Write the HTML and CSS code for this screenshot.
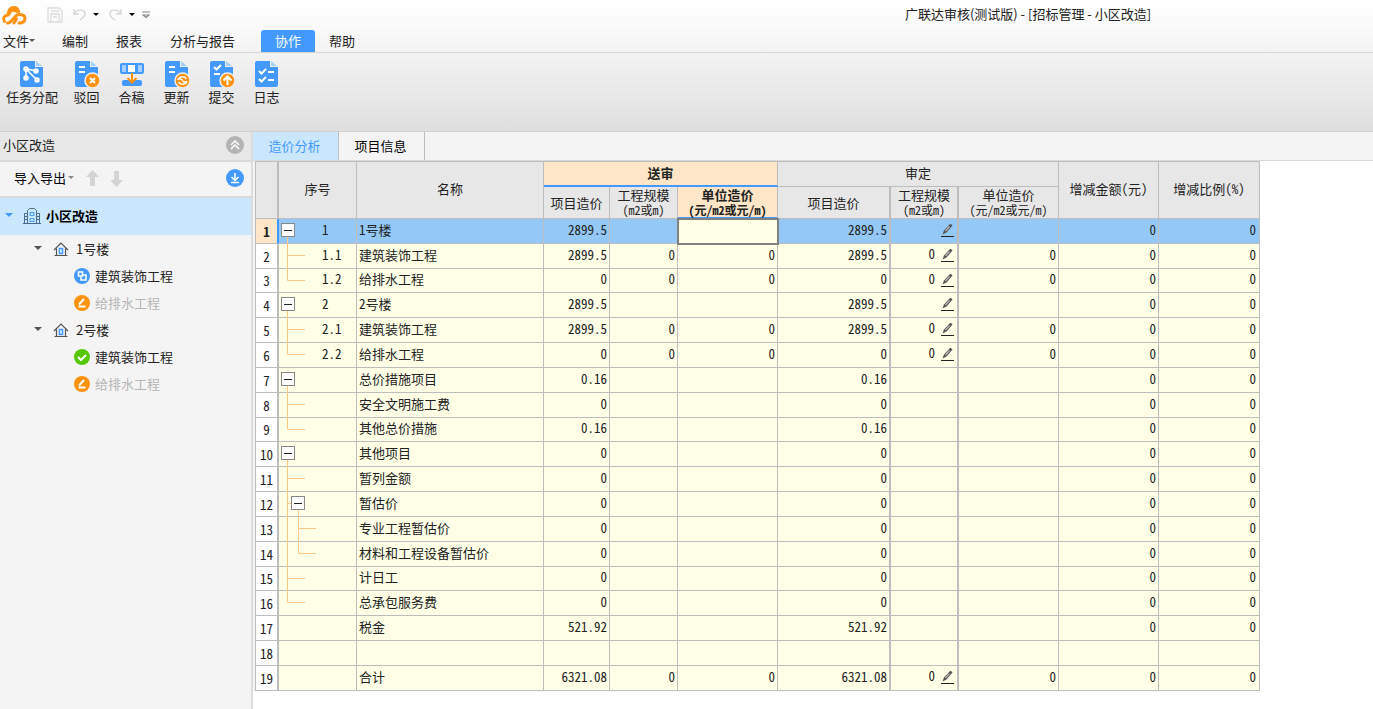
FILE: index.html
```html
<!DOCTYPE html>
<html lang="zh-CN">
<head>
<meta charset="utf-8">
<title>广联达审核</title>
<link rel="stylesheet" href="styles.css">
</head>
<body>
<svg class="defs" aria-hidden="true">
  <symbol id="pen" viewBox="0 0 14 14"><path d="M2.500 11.500 4 7.500 10 1q1.500-.5 2.500 1.500L6.500 9.500Z" fill="#555"/><path d="M5.500 8 9.500 3.500" stroke="#bbb" stroke-width="1.200"/><path d="M1 13.500H14" stroke="#222"/></symbol>
  <symbol id="house" viewBox="0 0 16 16"><path d="M1 9 8 2l7 7M3.500 7.500v7M12.500 7.500v7M1.500 14.500h13" fill="none" stroke="#555" stroke-width="1.200"/><path d="M6.500 7.500h3v5h-3z" fill="#fff" stroke="#4499ff" stroke-width="1.600"/></symbol>
  <symbol id="edit" viewBox="0 0 16 16"><circle cx="8" cy="8" r="8" fill="#ff930f"/><path d="m5 9.500 5-5.500M4.500 11.500h7" stroke="#fff" stroke-width="2"/></symbol>
  <symbol id="page" viewBox="0 0 26 28"><path d="M3 1H16V7H24V25a2 2 0 0 1-2 2H3a2 2 0 0 1-2-2V3a2 2 0 0 1 2-2Z" fill="#4499ff"/><path d="m17 1 6 5h-6Z" fill="#a6d0ff"/></symbol>
</svg>
<header class="titlebar">
  <svg class="logo" width="26" height="20" viewBox="0 0 26 20" fill="none" stroke="#ff930f" stroke-width="3" stroke-linecap="round" stroke-linejoin="round"><path d="M3.500 16.500C1.500 13.500 3 10.500 7 10 7.500 5 9.500 2.500 12.500 2.500c3 0 4.500 1.500 5 4"/><path d="M8 8.500C9 5 11 3.500 16 6" stroke-width="4"/><path d="M6.500 18c5 0 6-8.500 12-8.500 3.500 0 5.500 1.500 5.500 4 0 3-2.500 4.500-6 4.500M13 18l2.500-4"/></svg>
  <div class="quick">
    <button type="button" aria-label="保存"><svg width="16" height="16" viewBox="0 0 16 16" fill="none" stroke="#dcdcdc" stroke-width="1.300"><path d="M1 1h11l3 3v11H1zM4 4h8M4 15V7h8v8M6 10h4"/></svg></button>
    <button type="button" aria-label="撤销" class="undo"><svg width="13" height="13" viewBox="0 0 13 13" fill="none" stroke="#d4d4d4" stroke-width="1.300"><path d="M1 1v5h5M1 6c3-5 10-5 11-1 .6 3-2 5-5 7"/></svg></button>
    <svg class="caret" width="6" height="4"><path d="M0 0h6L3 3Z"/></svg>
    <button type="button" aria-label="重做" class="redo"><svg width="13" height="13" viewBox="0 0 13 13" fill="none" stroke="#d4d4d4" stroke-width="1.300"><path d="M12 1v5H7M12 6C9 1 2 1 1 5c-.6 3 2 5 5 7"/></svg></button>
    <svg class="caret" width="6" height="4"><path d="M0 0h6L3 3Z"/></svg>
    <svg class="caret" width="8" height="8" fill="none" stroke="#888" stroke-width="1.200"><path d="M0 1h8M1 4l3 2.500L7 4Z"/></svg>
  </div>
  <h1>广联达审核(测试版) - [招标管理 - 小区改造]</h1>
</header>
<nav class="menu">
  <button type="button" class="file">文件<svg width="6" height="4" fill="#555"><path d="M0 0h6L3 3Z"/></svg></button>
  <button type="button">编制</button>
  <button type="button">报表</button>
  <button type="button">分析与报告</button>
  <button type="button" class="current">协作</button>
  <button type="button">帮助</button>
</nav>
<div class="ribbon">
  <button type="button"><svg width="26" height="28"><use href="#page"/><g fill="#fff" stroke="#fff" stroke-width="1.500"><path d="M7 9 18 11M7 9v9M7 9l11 11" fill="none"/><circle cx="7" cy="9" r="2"/><circle cx="17" cy="11" r="2"/><circle cx="7" cy="18" r="2"/><circle cx="18" cy="20" r="2"/></g></svg>任务分配</button>
  <button type="button"><svg width="26" height="28"><use href="#page"/><path d="M5 7h6M5 12h6" stroke="#fff" stroke-width="2"/><circle cx="18.500" cy="20.500" r="7.500" fill="#ff930f" stroke="#eee" stroke-width="1.500"/><path d="m16 18 5 5m0-5-5 5" stroke="#fff" stroke-width="2"/></svg>驳回</button>
  <button type="button"><svg width="26" height="28"><rect x="1" y="3" width="24" height="11" rx="2" fill="#4499ff"/><path d="M3 5h4v7H3zM19 5h4v7h-4z" fill="#a6d0ff"/><path d="M9 5h7v7H9z" fill="#fff"/><rect x="3" y="20" width="20" height="6" rx="2" fill="#4499ff"/><path d="M13 13v9M8.500 18l4.500 4.500 4.500-4.500" fill="none" stroke="#ff930f" stroke-width="2"/></svg>合稿</button>
  <button type="button"><svg width="26" height="28"><use href="#page"/><path d="M5 7h6M5 12h6" stroke="#fff" stroke-width="2"/><circle cx="18.500" cy="20.500" r="7.500" fill="#ff930f" stroke="#eee" stroke-width="1.500"/><path d="M14 20c1-4 7-4 8.500-1M23 21c-1 4-7 4-8.500 1M15 18.500l3.500 1.500M22 22.500 18.500 21" fill="none" stroke="#fff" stroke-width="1.500"/></svg>更新</button>
  <button type="button"><svg width="26" height="28"><use href="#page"/><path d="m5 7 2.500 2.500L12 5M5 14h6" fill="none" stroke="#fff" stroke-width="2"/><circle cx="18.500" cy="20.500" r="7.500" fill="#ff930f" stroke="#eee" stroke-width="1.500"/><path d="M18.500 25v-8M14.500 20.500l4-4 4 4" fill="none" stroke="#fff" stroke-width="2"/></svg>提交</button>
  <button type="button"><svg width="26" height="28"><use href="#page"/><path d="m5 11 2.500 2.500L12 9M5 19l2.500 2.500L12 17M14 12h6M14 20h6" fill="none" stroke="#fff" stroke-width="2"/></svg>日志</button>
</div>
<div class="workspace">
  <aside class="side">
    <div class="side-title"><h2>小区改造</h2><button type="button" aria-label="收起"><svg width="18" height="18"><circle cx="9" cy="9" r="9" fill="#b4b4b4"/><path d="m5 9 4-4 4 4M5 13l4-4 4 4" fill="none" stroke="#fff" stroke-width="1.500"/></svg></button></div>
    <div class="side-tools">
      <button type="button" class="io">导入导出<svg width="6" height="4" fill="#888"><path d="M0 0h6L3 3Z"/></svg></button>
      <button type="button" aria-label="上移"><svg width="13" height="17" fill="#d4d4d4"><path d="M6.500 0 13 7H9v9H4V7H0Z"/></svg></button>
      <button type="button" aria-label="下移" class="down"><svg width="13" height="17" fill="#d4d4d4"><path d="M6.500 17 13 10H9V1H4v9H0Z"/></svg></button>
      <button type="button" aria-label="下载" class="last"><svg width="18" height="18"><circle cx="9" cy="9" r="9" fill="#4499ff"/><path d="M9 4v7M5.500 8 9 11.500 12.500 8M5 13.500h8" fill="none" stroke="#fff" stroke-width="1.500"/></svg></button>
    </div>
    <ul class="nav-tree">
      <li class="root"><svg class="arrow" width="8" height="5" fill="#4499ff"><path d="M0 0h8L4 4Z"/></svg><svg width="18" height="18" fill="none" stroke="#4b6c93"><path d="M4.500 16V3.500l2-2h5l2 2V16M1.500 16V6.500h3M13.500 6.500h3V16M0 16.500h18M2 9.500h2M2 12.500h2M14 9.500h2M14 12.500h2"/><path d="M7 5.500h4v3H7zM7 11.500h4v3H7z" stroke="#4499ff"/></svg>小区改造</li>
      <li class="building"><svg class="arrow" width="8" height="5" fill="#555"><path d="M0 0h8L4 4Z"/></svg><svg width="16" height="16"><use href="#house"/></svg>1号楼</li>
      <li class="leaf"><svg width="16" height="16"><circle cx="8" cy="8" r="8" fill="#4499ff"/><path d="M4.500 4h4v4h-4zM8 7h4v5H7V9" fill="none" stroke="#fff" stroke-width="1.500"/></svg>建筑装饰工程</li>
      <li class="leaf muted"><svg width="16" height="16"><use href="#edit"/></svg>给排水工程</li>
      <li class="building"><svg class="arrow" width="8" height="5" fill="#555"><path d="M0 0h8L4 4Z"/></svg><svg width="16" height="16"><use href="#house"/></svg>2号楼</li>
      <li class="leaf"><svg width="16" height="16"><circle cx="8" cy="8" r="8" fill="#55c800"/><path d="m4 8 3 3 5-5" fill="none" stroke="#fff" stroke-width="2"/></svg>建筑装饰工程</li>
      <li class="leaf muted"><svg width="16" height="16"><use href="#edit"/></svg>给排水工程</li>
    </ul>
  </aside>
  <main>
    <div class="tabs"><button type="button" class="current">造价分析</button><button type="button">项目信息</button></div>
    <div class="sheet">
    <table>
      <colgroup><col class="c-row"><col class="c-tree"><col class="c-name"><col class="c-cost"><col class="c-scale"><col class="c-unit"><col class="c-cost2"><col class="c-scale"><col class="c-unit"><col class="c-unit"><col class="c-last"></colgroup>
      <thead>
        <tr class="h1"><th rowspan="2" class="thick"></th><th rowspan="2">序号</th><th rowspan="2">名称</th><th colspan="3" class="hot">送审</th><th colspan="3">审定</th><th rowspan="2">增减金额(元)</th><th rowspan="2">增减比例(%)</th></tr>
        <tr class="h2"><th>项目造价</th><th>工程规模<span class="unit">(m2或m)</span></th><th class="hot">单位造价<span class="unit">(元/m2或元/m)</span></th><th class="thick">项目造价</th><th class="thick">工程规模<span class="unit">(m2或m)</span></th><th>单位造价<span class="unit">(元/m2或元/m)</span></th></tr>
      </thead>
      <tbody>
        <tr class="selected"><th>1</th><td class="tree"><svg class="guide"><path d="M8.500 18V25"/></svg><button type="button" class="toggle" aria-label="折叠"></button>1</td><td>1号楼</td><td>2899.5</td><td></td><td class="active"></td><td>2899.5</td><td><button type="button" class="pen" aria-label="编辑"><svg><use href="#pen"/></svg></button></td><td></td><td>0</td><td>0</td></tr>
        <tr><th>2</th><td class="tree"><svg class="guide"><path d="M8.500 0V25M8.500 11.500H26"/></svg>1.1</td><td>建筑装饰工程</td><td>2899.5</td><td>0</td><td>0</td><td>2899.5</td><td>0<button type="button" class="pen" aria-label="编辑"><svg><use href="#pen"/></svg></button></td><td>0</td><td>0</td><td>0</td></tr>
        <tr class="tight"><th>3</th><td class="tree"><svg class="guide"><path d="M8.500 0V11.500H26"/></svg>1.2</td><td>给排水工程</td><td>0</td><td>0</td><td>0</td><td>0</td><td>0<button type="button" class="pen" aria-label="编辑"><svg><use href="#pen"/></svg></button></td><td>0</td><td>0</td><td>0</td></tr>
        <tr><th>4</th><td class="tree"><svg class="guide"><path d="M8.500 18V25"/></svg><button type="button" class="toggle" aria-label="折叠"></button>2</td><td>2号楼</td><td>2899.5</td><td></td><td></td><td>2899.5</td><td><button type="button" class="pen" aria-label="编辑"><svg><use href="#pen"/></svg></button></td><td></td><td>0</td><td>0</td></tr>
        <tr><th>5</th><td class="tree"><svg class="guide"><path d="M8.500 0V25M8.500 11.500H26"/></svg>2.1</td><td>建筑装饰工程</td><td>2899.5</td><td>0</td><td>0</td><td>2899.5</td><td>0<button type="button" class="pen" aria-label="编辑"><svg><use href="#pen"/></svg></button></td><td>0</td><td>0</td><td>0</td></tr>
        <tr><th>6</th><td class="tree"><svg class="guide"><path d="M8.500 0V11.500H26"/></svg>2.2</td><td>给排水工程</td><td>0</td><td>0</td><td>0</td><td>0</td><td>0<button type="button" class="pen" aria-label="编辑"><svg><use href="#pen"/></svg></button></td><td>0</td><td>0</td><td>0</td></tr>
        <tr><th>7</th><td class="tree"><svg class="guide"><path d="M8.500 18V25"/></svg><button type="button" class="toggle" aria-label="折叠"></button></td><td>总价措施项目</td><td>0.16</td><td></td><td></td><td>0.16</td><td></td><td></td><td>0</td><td>0</td></tr>
        <tr><th>8</th><td class="tree"><svg class="guide"><path d="M8.500 0V25M8.500 11.500H26"/></svg></td><td>安全文明施工费</td><td>0</td><td></td><td></td><td>0</td><td></td><td></td><td>0</td><td>0</td></tr>
        <tr class="tight"><th>9</th><td class="tree"><svg class="guide"><path d="M8.500 0V11.500H26"/></svg></td><td>其他总价措施</td><td>0.16</td><td></td><td></td><td>0.16</td><td></td><td></td><td>0</td><td>0</td></tr>
        <tr><th>10</th><td class="tree"><svg class="guide"><path d="M8.500 18V25"/></svg><button type="button" class="toggle" aria-label="折叠"></button></td><td>其他项目</td><td>0</td><td></td><td></td><td>0</td><td></td><td></td><td>0</td><td>0</td></tr>
        <tr><th>11</th><td class="tree"><svg class="guide"><path d="M8.500 0V25M8.500 11.500H26"/></svg></td><td>暂列金额</td><td>0</td><td></td><td></td><td>0</td><td></td><td></td><td>0</td><td>0</td></tr>
        <tr><th>12</th><td class="tree"><svg class="guide"><path d="M8.500 0V25M8.500 11.500H13M19.500 18V25"/></svg><button type="button" class="toggle deep" aria-label="折叠"></button></td><td>暂估价</td><td>0</td><td></td><td></td><td>0</td><td></td><td></td><td>0</td><td>0</td></tr>
        <tr><th>13</th><td class="tree"><svg class="guide"><path d="M8.500 0V25M19.500 0V25M19.500 11.500H37"/></svg></td><td>专业工程暂估价</td><td>0</td><td></td><td></td><td>0</td><td></td><td></td><td>0</td><td>0</td></tr>
        <tr><th>14</th><td class="tree"><svg class="guide"><path d="M8.500 0V25M19.500 0V11.500H37"/></svg></td><td>材料和工程设备暂估价</td><td>0</td><td></td><td></td><td>0</td><td></td><td></td><td>0</td><td>0</td></tr>
        <tr class="tight"><th>15</th><td class="tree"><svg class="guide"><path d="M8.500 0V25M8.500 11.500H26"/></svg></td><td>计日工</td><td>0</td><td></td><td></td><td>0</td><td></td><td></td><td>0</td><td>0</td></tr>
        <tr><th>16</th><td class="tree"><svg class="guide"><path d="M8.500 0V11.500H26"/></svg></td><td>总承包服务费</td><td>0</td><td></td><td></td><td>0</td><td></td><td></td><td>0</td><td>0</td></tr>
        <tr><th>17</th><td class="tree"></td><td>税金</td><td>521.92</td><td></td><td></td><td>521.92</td><td></td><td></td><td>0</td><td>0</td></tr>
        <tr><th>18</th><td class="tree"></td><td></td><td></td><td></td><td></td><td></td><td></td><td></td><td></td><td></td></tr>
        <tr><th>19</th><td class="tree"></td><td>合计</td><td>6321.08</td><td>0</td><td>0</td><td>6321.08</td><td>0<button type="button" class="pen" aria-label="编辑"><svg><use href="#pen"/></svg></button></td><td>0</td><td>0</td><td>0</td></tr>
      </tbody>
    </table>
    </div>
  </main>
</div>
</body>
</html>
```
FILE: styles.css
```css
* { box-sizing: border-box; }
body {
  margin: 0;
  min-height: 100vh;
  display: flex;
  flex-direction: column;
  font: 13px/18px "Noto Sans CJK SC", sans-serif;
  color: #222;
  background: #fff;
}
button { border: 0; padding: 0; margin: 0; background: none; font: inherit; color: inherit; }
h1, h2 { margin: 0; font-size: 13px; font-weight: 400; }
svg { flex: none; }
.defs { position: absolute; width: 0; height: 0; }

.titlebar { display: flex; align-items: center; height: 29px; background: linear-gradient(#fff, #f9f9f9); }
.logo { margin-left: 1px; }
.quick { display: flex; align-items: center; margin-left: 20px; width: 102px; }
.quick button { display: flex; }
.quick .undo { margin-left: 10px; }
.quick .redo { margin-left: 10px; }
.caret { margin-left: 7px; }
.titlebar h1 { flex: 1; padding: 0 0 2px 534px; text-align: center; white-space: nowrap; }

.menu { display: flex; align-items: flex-end; height: 24px; background: linear-gradient(#f9f9f9, #f3f3f3); border-bottom: 1px solid #d6d6d6; }
.menu button { height: 22px; padding: 0 14px; }
.menu .file { display: flex; align-items: center; width: 48px; padding: 0 0 0 3px; }
.menu .current { margin-left: 12px; color: #fff; background: #4499ff; border-radius: 3px 3px 0 0; }

.ribbon { display: flex; align-items: flex-start; height: 79px; padding-top: 7px; background: linear-gradient(#f3f3f3, #dfdfdf); border-bottom: 1px solid #cfcfcf; }
.ribbon button { display: flex; flex-direction: column; align-items: center; width: 45px; }
.ribbon button:first-child { width: 64px; }

.workspace { flex: 1; display: flex; }
.side { width: 253px; flex: none; background: #f4f4f4; border-right: 2px solid #dcdcdc; }
.side-title { display: flex; align-items: center; justify-content: space-between; height: 30px; padding: 0 7px 2px 3px; background: #e7e7e7; border-bottom: 2px solid #d9d9d9; }
.side-title button { display: flex; }
.side-tools { display: flex; align-items: center; height: 36px; padding: 0 7px 2px 14px; border-bottom: 2px solid #d9d9d9; }
.side-tools button { display: flex; align-items: center; }
.side-tools .io { gap: 2px; margin-right: 12px; color: #000; }
.side-tools .down { margin-left: 11px; }
.side-tools .last { margin-left: auto; }
.nav-tree { list-style: none; margin: 0; padding: 0; }
.nav-tree li { display: flex; align-items: center; height: 27px; gap: 6px; }
.nav-tree .root { height: 37px; padding: 0 0 2px 5px; color: #000; background: #cbe7fe; font-weight: 700; }
.nav-tree .arrow { margin-right: 4px; }
.nav-tree .root svg + svg { margin-right: -1px; }
.nav-tree .building { padding-left: 34px; gap: 7px; }
.nav-tree .leaf { padding-left: 74px; gap: 5px; }
.nav-tree .muted { color: #b4b4b4; }

main { flex: 1; min-width: 0; }
.tabs { display: flex; height: 29px; background: #f4f4f4; border-bottom: 1px solid #d9d9d9; }
.tabs button { width: 86px; padding-right: 2px; border-right: 1px solid #bdbdbd; color: #000; }
.tabs .current { background: #cbe7fe; color: #4499ff; }
.sheet { border-left: 2px solid #f4f4f4; }

table { table-layout: fixed; width: 1005px; border-collapse: separate; border-spacing: 0; border-top: 1px solid #bdbdbd; border-left: 1px solid #bdbdbd; line-height: 14px; font-feature-settings: "hwid"; }
.c-row { width: 23px; }
.c-tree { width: 78px; }
.c-name { width: 187px; }
.c-cost { width: 66px; }
.c-cost2 { width: 113px; }
.c-scale { width: 68px; }
.c-unit { width: 100px; }
.c-last { width: 101px; }
th, td { padding: 0; border-right: 1px solid #bdbdbd; border-bottom: 1px solid #bdbdbd; white-space: nowrap; }
th { font-weight: 400; text-align: center; background: #e7e7e7; }
thead th { padding-bottom: 2px; }
.h1 { height: 25px; }
.h2 { height: 32px; }
.h2 th { padding-bottom: 0; }
.unit { display: block; font-size: 12px; line-height: 15px; }
.hot { font-weight: 700; background: #ffe6c8; border-bottom: 2px solid #4499ff; }
.thick, tbody th, tbody td:nth-child(7), tbody td:nth-child(8) { border-right-width: 2px; }
tbody tr { height: 25px; }
tbody .tight { height: 24px; }
tbody th { padding-top: 1px; background: #fff; }
tbody td { padding: 0 2px 3px; text-align: right; background: #ffffe8; }
tbody td:nth-child(3) { text-align: left; }
tbody td:last-child { padding-right: 3px; }
.selected th { font-weight: 700; background: #ffe6c8; border-right-color: #4499ff; }
.selected td { background: #93c8f7; }
.selected .active { background: #ffffe8; outline: 2px solid #808080; outline-offset: -1px; }
tbody .tree { position: relative; padding-left: 43px; text-align: left; }
.guide { position: absolute; left: 0; top: 0; width: 40px; height: 25px; overflow: visible; fill: none; stroke: #ffc882; z-index: 1; }
.toggle { position: absolute; left: 2px; top: 4px; width: 14px; height: 14px; border: 1px solid #888; background: linear-gradient(#222, #222) center / 8px 1px no-repeat #fff; z-index: 2; }
.toggle.deep { left: 12px; }
.pen { margin: 0 1px 0 5px; vertical-align: -3px; height: 14px; }
.pen svg { display: block; width: 14px; height: 14px; }
```
